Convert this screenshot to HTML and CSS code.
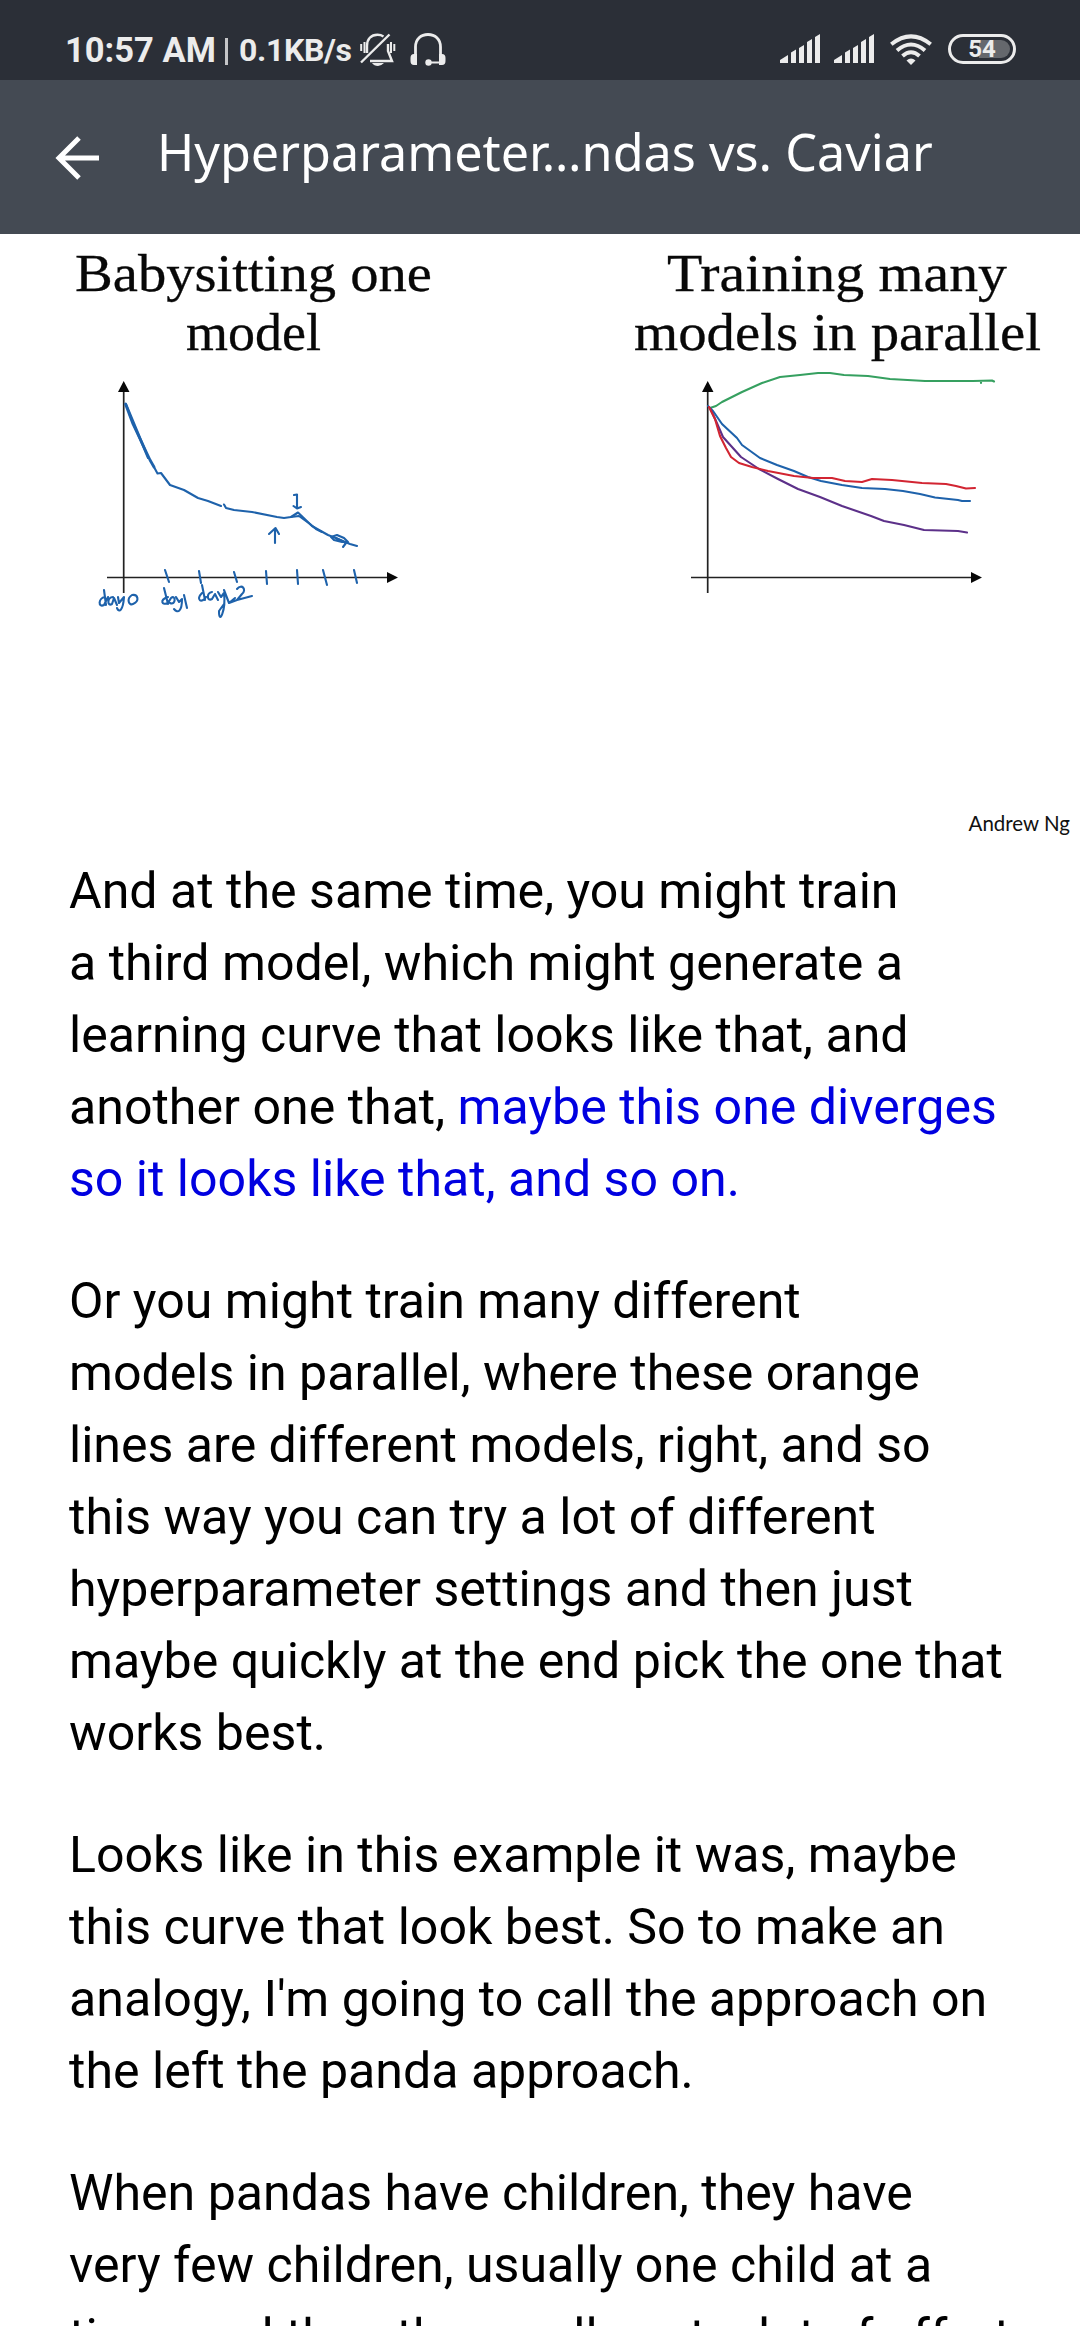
FILE: index.html
```html
<!DOCTYPE html>
<html lang="en">
<head>
<meta charset="utf-8">
<title>Hyperparameter tuning: Pandas vs. Caviar</title>
<link rel="stylesheet" href="styles.css">
</head>
<body>
<div class="screen">
  <header class="status">
    <span class="clock">10:57 AM</span>
    <span class="divider"></span>
    <span class="speed">0.1KB/s</span>
    <svg class="bell" viewBox="0 0 36 34" width="36" height="34" fill="none" stroke="#ececec" stroke-width="2.4">
      <path d="M7 20V13C7 6 11 1.8 17.500 1.800C20 1.800 22 2.500 23.500 3.500M28 11V18L32 28H10"/>
      <path d="M1 29.500L29.500 1.500"/>
      <path d="M1.200 11V18M4.500 9V20M31 9V20M34.300 11V18" stroke-width="2"/>
      <path d="M12 30H24Q21 33 18 33Q14 33 12 30Z" fill="#ececec" stroke="none"/>
    </svg>
    <svg class="headset" viewBox="0 0 36 34" width="36" height="34" fill="none" stroke="#ececec" stroke-width="2.800">
      <path d="M5.500 23V14C5.500 6 11 1.500 18 1.500S30.500 6 30.500 14V23"/>
      <path d="M18 29.500H30" stroke-width="2"/>
      <path d="M7 21V32H4Q.5 32 .5 28V25Q.5 21 4 21ZM29 21V32H32Q35.500 32 35.500 28V25Q35.500 21 32 21Z" fill="#ececec" stroke="none"/>
      <circle cx="18.500" cy="29.500" r="3.200" fill="#ececec" stroke="none"/>
    </svg>
    <span class="spacer"></span>
    <svg class="signal" viewBox="0 0 41 29" width="41" height="29" fill="#ececec"><path d="M0 29V26L8 21V29ZM11 29V18.500L16 15.500V29ZM19 29V14L24 11V29ZM27 29V8L32 5V29ZM35 29V3L40 0V29Z"/></svg>
    <svg class="signal" viewBox="0 0 41 29" width="41" height="29" fill="#ececec"><path d="M0 29V26L8 21V29ZM11 29V18.500L16 15.500V29ZM19 29V14L24 11V29ZM27 29V8L32 5V29ZM35 29V3L40 0V29Z"/></svg>
    <svg class="wifi" viewBox="0 0 42 31" width="42" height="31" fill="none" stroke="#ececec" stroke-width="4">
      <path d="M1.300 10.300Q21 -5.500 40.700 10.300"/>
      <path d="M7 16.500Q21 4.500 35 16.500"/>
      <path d="M12.500 22Q21 14.500 29.500 22"/>
      <path d="M21 31L16.500 26.500Q21 22.500 25.500 26.500Z" fill="#ececec" stroke="none"/>
    </svg>
    <span class="battery"><span class="charge"></span><span class="level">54</span></span>
  </header>

  <nav class="toolbar">
    <svg class="back" viewBox="0 0 44 44" width="44" height="44" fill="none" stroke="#fff" stroke-width="5"><path d="M44 22H4M24 2L4 22L24 42"/></svg>
    <h1 class="title">Hyperparameter…ndas vs. Caviar</h1>
  </nav>

  <main class="content">
    <section class="slide">
      <svg class="chart" viewBox="0 234 540 550" width="540" height="550">
        <g class="caption">
          <text x="75" y="290.500" textLength="357" lengthAdjust="spacingAndGlyphs">Babysitting one</text>
          <text x="186" y="349.500" textLength="135" lengthAdjust="spacingAndGlyphs">model</text>
        </g>
        <g class="axes">
          <path d="M123.700 388V593M107 577.500H390"/>
          <path class="tip" d="M123.700 381L129.500 392H118ZM398 577.500L387 572V583Z"/>
        </g>
        <g class="ink blue">
          <path stroke-width="2.800" d="M125.500 404L133 424L142 443L150 460L154 467"/>
          <path d="M154 467L157.500 473.500L161 473L170 485L184 490L198 498L208 501L221 506"/>
          <path d="M126 404L146 452M129 413L148 458M224 504.500L226 508L234 510L252 512L277 517L284 518L291 517L298 512.500L312 526L319 530L328 535L338 539L350 544L357 546"/>
          <path d="M291 517L299 516L310 524L316 529L322 532M331 537L337 535L344 538L348 542L342 542L334 540L331 537M336 538L346 543L343 547"/>
          <path d="M294 495L297 494.500V508M293.500 506L297 508.500L301 507M275 543V529M269 534L275.500 528L279 534"/>
          <path d="M165 570L169 582M199 571L201 583M234 572L237 582M266 571L267 584M297 570L298 584M323 570L327 585M354 570L357 583"/>
          <path d="M104 590L106 605M105 597C98 598 98 608 104 605L108 597M113 597C107 597 107 607 112 604L114 598L117 605M118 597L119 603L124 597C123 611 119 613 117 608M132 595C126 599 129 606 133 604C140 601 138 594 132 595"/>
          <path d="M164 588L168 604M168 597C159 600 162 606 168 603L171 598C176 594 176 606 170 603M176 597L179 602L182 599C182 611 178 614 174 609M184 595L187 608"/>
          <path d="M202 585L205 600M202 593C195 600 202 604 206 597M212 592C206 593 207 602 212 599L215 594L218 600M218 592L221 597L224 593C226 610 219 626 219 611L224 604M224 590L229 603L235 598M237 589C242 583 247 590 242 594L237 600L252 596M229 603L237 600"/>
        </g>
      </svg>
      <svg class="chart" viewBox="540 234 540 550" width="540" height="550">
        <g class="caption">
          <text x="667" y="290.500" textLength="340" lengthAdjust="spacingAndGlyphs">Training many</text>
          <text x="634" y="349.500" textLength="407" lengthAdjust="spacingAndGlyphs">models in parallel</text>
        </g>
        <g class="axes">
          <path d="M707.700 388V593M691 577.500H974"/>
          <path class="tip" d="M707.700 381L713.500 392H702ZM982 577.500L971 572V583Z"/>
        </g>
        <g class="ink">
          <path class="green" d="M710 408L716 406L722 402L742 392L762 383L780 377L800 375L818 373L830 373L844 375L868 376L890 379L925 381L973 381L992 380.500L994 381.500M981 382V383"/>
          <path class="blue" d="M708 406L713 411L722 424L737 438L742 445L760 458L777 465L794 471L808 477L821 481L842 485L862 488L885 489L903 491L920 494L935 497.500L958 500L962 501H970"/>
          <path class="violet" d="M710 408L716 421L723 437L741 457L759 469L778 479L798 489L820 497L842 506L871 516L884 521L904 525L924 530L958 531L967 532.500"/>
          <path class="red" d="M709 407L715 419L720 436L726 448L731 457L739 463L752 467L768 471L794 476L813 478L832 478L845 481L862 482L872 479L892 480L922 483L946 484L956 486L966 488.500L975 488"/>
        </g>
      </svg>
      <p class="author">Andrew Ng</p>
    </section>

    <article class="transcript">
      <p>And at the same time, you might train<br>a third model, which might generate a<br>learning curve that looks like that, and<br>another one that, <span class="current">maybe this one diverges<br>so it looks like that, and so on.</span></p>
      <p>Or you might train many different<br>models in parallel, where these orange<br>lines are different models, right, and so<br>this way you can try a lot of different<br>hyperparameter settings and then just<br>maybe quickly at the end pick the one that<br>works best.</p>
      <p>Looks like in this example it was, maybe<br>this curve that look best. So to make an<br>analogy, I'm going to call the approach on<br>the left the panda approach.</p>
      <p>When pandas have children, they have<br>very few children, usually one child at a<br>time, and then they really put a lot of effort</p>
    </article>
  </main>
</div>
</body>
</html>
```

FILE: styles.css
```css
* { box-sizing: border-box; }
html, body { margin: 0; background: #fff; }
body { overflow: hidden; }

.screen {
  display: flex;
  flex-direction: column;
  width: 1080px;
  height: 2326px;
  overflow: hidden;
  background: #fff;
}
svg { display: block; flex: none; }

.status {
  display: flex;
  align-items: center;
  flex: none;
  height: 80px;
  padding: 20px 64px 0 65px;
  background: #2b2f37;
  color: #ececec;
  font-family: Roboto, "Liberation Sans", sans-serif;
  font-weight: 700;
  white-space: nowrap;
}
.clock { width: 160px; font-size: 34.5px; }
.divider { width: 3px; height: 27px; margin: 3px 11px 0 0; background: #c5c6c8; }
.speed { width: 121px; font-size: 32px; letter-spacing: -0.35px; }
.bell { margin-right: 14px; }
.spacer { flex: 1; }
.signal { margin: -3px 13px 0 0; }
.wifi { margin: -1px 16px 0 2px; }
.battery {
  position: relative;
  display: flex;
  align-items: center;
  justify-content: center;
  width: 68px;
  height: 30px;
  margin-top: -2px;
  border: 3px solid #ececec;
  border-radius: 15px;
}
.charge {
  position: absolute;
  top: 3px;
  right: 3px;
  width: 31px;
  height: 18px;
  border-radius: 0 9px 9px 0;
  background: #65686d;
}
.level { position: relative; font-size: 24px; line-height: 24px; }

.toolbar {
  display: flex;
  align-items: center;
  flex: none;
  gap: 58px;
  height: 154px;
  padding: 0 55px;
  background: #444a53;
}
.back { margin-top: 1px; }
.title {
  margin: -10px 0 0;
  color: #fff;
  font: 400 50.3px/68px "Noto Sans", "Open Sans", sans-serif;
  white-space: nowrap;
}

.content { flex: 1; min-height: 0; overflow: hidden; }
.slide {
  display: grid;
  grid-template-columns: 540px 540px;
  grid-template-rows: 550px 57px;
  height: 607px;
}
.chart { overflow: visible; }
.caption {
  fill: #080808;
  stroke: #080808;
  stroke-width: 0.3;
  font: 53px "Liberation Serif", serif;
}
.axes { fill: none; stroke: #222; stroke-width: 1.7; }
.axes .tip { fill: #080808; stroke: none; }
.ink { fill: none; stroke-width: 2.1; stroke-linejoin: round; stroke-linecap: round; }
.blue { stroke: #1e62ab; }
.green { stroke: #36a060; }
.violet { stroke: #5c3089; }
.red { stroke: #d22532; }
.author {
  grid-column: 2;
  justify-self: end;
  margin: 25px 10px 0 0;
  color: #111;
  font: 20.5px/28px Lato, "Open Sans", sans-serif;
}

.transcript {
  padding: 14px 0 0 69px;
  color: #000;
  font: 400 50.1px/72px Roboto, "Liberation Sans", sans-serif;
  white-space: nowrap;
}
.transcript p { margin: 0 0 50px; }
.current { color: #0000e0; }
```
